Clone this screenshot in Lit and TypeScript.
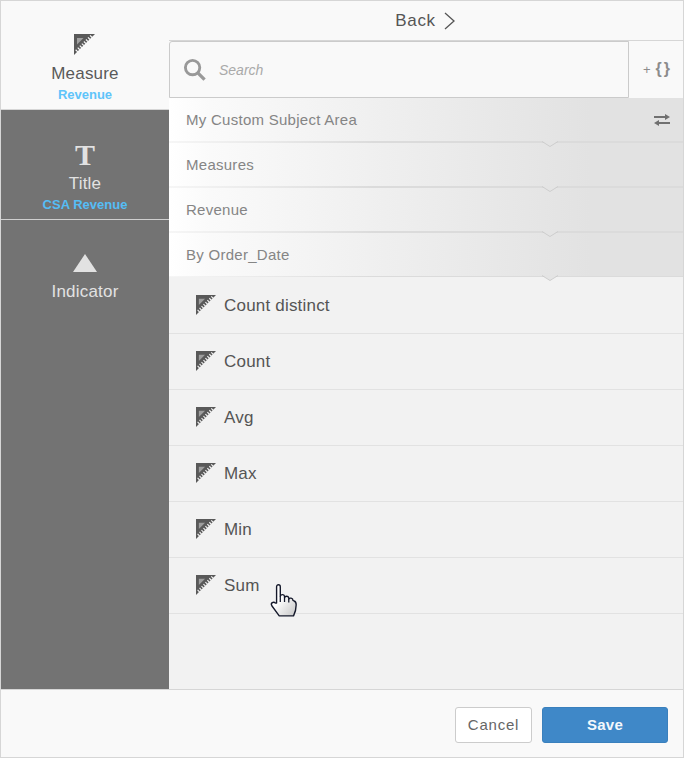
import { LitElement, html, css, svg } from "lit";
import { customElement } from "lit/decorators.js";

const ruler = (cls: string) => html`<svg class=${cls} viewBox="0 0 21 21" width="21" height="21">
  <path d="M0 0H21L0 21Z" fill="currentColor"/>
  <path d="M3 4H9.500L3 10.500Z" fill="var(--hole)" opacity=".45"/>
  <path d="M17.500 2L2 17.500" stroke="var(--hole)" stroke-width="3" stroke-dasharray="1.200 1.700" fill="none"/>
</svg>`;

const notch = html`<svg class="notch" width="18" height="7" viewBox="0 0 18 7"><path d="M1 0L9 5.500L17 0Z" fill="#e4e4e4"/><path d="M1 0.500L9 5.500L17 0.500" fill="none" stroke="#cdcdcd" stroke-width="1"/></svg>`;

@customElement("app-root")
export class AppRoot extends LitElement {
  static styles = css`
    :host { display: block; width: 684px; height: 758px; font-family: "Liberation Sans", Arial, sans-serif; }
    * { box-sizing: border-box; }
    .frame { width: 684px; height: 758px; border: 1px solid #d6d6d6; display: flex; flex-direction: column; background: #f9f9f9; }
    .body { flex: 1; display: flex; min-height: 0; }
    .side { width: 168px; background: #737373; display: flex; flex-direction: column; flex: none; }
    .tab { height: 110px; display: flex; flex-direction: column; align-items: center; color: #e2e2e2; border-bottom: 1px solid #cfcfcf; }
    .tab.first { height: 109px; background: #f9f9f9; color: #595959; padding-top: 33px; border-bottom: 1px solid #d6d6d6; --hole: #f9f9f9; }
    .tab.first svg { display: block; color: #595959; margin-left: -1px; }
    .tab.second { padding-top: 31px; }
    .tab.third { border-bottom: 0; padding-top: 34px; }
    .tab .t { font-family: "Liberation Serif", serif; font-size: 30px; line-height: 28px; height: 28px; font-weight: 700; color: #e2e2e2; }
    .lbl { font-size: 17px; line-height: 20px; letter-spacing: .2px; }
    .first .lbl { margin-top: 9px; }
    .second .lbl { margin-top: 5px; }
    .third .lbl { margin-top: 4px; }
    .sub { font-size: 13px; font-weight: 700; line-height: 16px; color: #5fc4fa; margin-top: 3px; }
    .second .sub { color: #55bdf5; margin-top: 3px; }
    .tri { width: 0; height: 0; border-left: 12px solid transparent; border-right: 12px solid transparent; border-bottom: 18px solid #e2e2e2; margin-bottom: 6px; }
    .main { flex: 1; display: flex; flex-direction: column; min-width: 0; background: #f2f2f2; }
    .top { height: 39px; flex: none; background: #f9f9f9; display: flex; align-items: center; justify-content: center; gap: 7px; color: #555; font-size: 17px; letter-spacing: .7px; padding-right: 1px; }
    .searchrow { height: 58px; flex: none; display: flex; background: #f9f9f9; border-top: 1px solid #d6d6d6; }
    .search { width: 460px; height: 57px; border: 1px solid #cbcbcb; border-radius: 3px 0 0 0; display: flex; align-items: center; padding-left: 13px; gap: 13px; color: #aaa; font-size: 14px; font-style: italic; background: #f9f9f9; }
    .vars { flex: 1; display: flex; align-items: center; justify-content: center; color: #8c8c8c; gap: 5px; padding-left: 3px; padding-bottom: 1px; }
    .vars .plus { font-size: 13px; }
    .vars .br { font-size: 16px; font-weight: 700; letter-spacing: 2px; }
    .crumb { position: relative; height: 45px; flex: none; display: flex; align-items: center; padding-left: 17px; font-size: 15px; letter-spacing: .27px; color: #858585; background: linear-gradient(90deg, #fff 0, #fafafa 8%, #e2e2e2 82%); border-bottom: 2px solid #dbdbdb; border-image: linear-gradient(90deg, #f6f6f6 0, #dbdbdb 40%) 1; justify-content: space-between; padding-right: 13px; }
    .crumb.last { border-bottom-width: 1px; height: 44px; }
    .notch { position: absolute; left: 372px; bottom: -7px; z-index: 1; }
    .crumb.last .notch { bottom: -6px; }
    .list { flex: 1; background: #f2f2f2; --hole: #f2f2f2; padding-top: 1px; }
    .row { height: 56px; border-bottom: 1px solid #e2e2e2; display: flex; align-items: center; padding-left: 27px; gap: 8px; font-size: 17px; letter-spacing: .2px; color: #555; position: relative; }
    .row svg.ico { color: #595959; margin-bottom: 2px; width: 20px; height: 20px; }
    .hand { position: absolute; left: 100px; top: 25px; z-index: 2; }
    .foot { height: 68px; flex: none; background: #f9f9f9; border-top: 1px solid #d6d6d6; display: flex; justify-content: flex-end; align-items: center; padding-right: 15px; gap: 10px; padding-top: 2px; }
    .btn { height: 36px; border-radius: 3px; display: flex; align-items: center; justify-content: center; font-family: inherit; font-size: 15px; }
    .cancel { width: 77px; background: #fff; border: 1px solid #ccc; color: #666; letter-spacing: .8px; }
    .save { width: 126px; background: #3f88c8; border: 1px solid #3a80bd; color: #f4f8fc; font-weight: 700; letter-spacing: .3px; }
  `;

  render() {
    const items = ["Count distinct", "Count", "Avg", "Max", "Min", "Sum"];
    return html`<div class="frame">
      <div class="body">
        <div class="side">
          <div class="tab first">${ruler("r")}<div class="lbl">Measure</div><div class="sub">Revenue</div></div>
          <div class="tab second"><div class="t">T</div><div class="lbl">Title</div><div class="sub">CSA Revenue</div></div>
          <div class="tab third"><div class="tri"></div><div class="lbl">Indicator</div></div>
        </div>
        <div class="main">
          <div class="top"><span>Back</span>
            <svg width="13" height="18" viewBox="0 0 13 18"><path d="M2 1l9 8-9 8" fill="none" stroke="#555" stroke-width="1.300"/></svg>
          </div>
          <div class="searchrow">
            <div class="search">
              <svg width="23" height="23" viewBox="0 0 24 24"><circle cx="10" cy="10" r="7.500" fill="none" stroke="#999" stroke-width="3"/><path d="M15.500 15.500l7 7" stroke="#999" stroke-width="3.500"/></svg>
              <span>Search</span>
            </div>
            <div class="vars"><span class="plus">+</span><span class="br">{}</span></div>
          </div>
          <div class="crumb"><span>My Custom Subject Area</span>
            <svg width="16" height="14" viewBox="0 0 16 14"><path d="M0 4H12M4 10H16" stroke="#707070" stroke-width="2"/><path d="M11 1L16 4 11 7ZM5 7L0 10 5 13Z" fill="#707070"/></svg>
            ${notch}
          </div>
          <div class="crumb"><span>Measures</span>${notch}</div>
          <div class="crumb"><span>Revenue</span>${notch}</div>
          <div class="crumb last"><span>By Order_Date</span>${notch}</div>
          <div class="list">
            ${items.map((t) => html`<div class="row">${ruler("ico")}<span>${t}</span>
              ${t === "Sum"
                ? html`<svg class="hand" width="30" height="36" viewBox="0 0 28 34">
                    <defs><linearGradient id="h" x1="0" y1="0" x2="1" y2="1"><stop offset="0.400" stop-color="#fff"/><stop offset="1" stop-color="#c4c4c4"/></linearGradient></defs>
                    ${svg`<path d="M7 19V3.500C7 1 10.500 1 10.500 3.500V12.500C11 10.500 14 10.500 14.500 12.500V14C15 12 18 12 18.500 14V15.500C19 13.500 22.500 14 22.500 16.500L23.500 17C25 17.500 25.500 19 25.500 20.500C25.500 25 24.500 28 23 31H9.500L2.500 21.500C1 19 4 17 6 19Z" fill="url(#h)" stroke="#14182a" stroke-width="1.300" stroke-linejoin="round"/><path d="M10.500 12.500V18M14.500 14V18M18.500 15.500V18.500" stroke="#14182a" stroke-width="1.200" fill="none"/>`}
                  </svg>`
                : ""}
            </div>`)}
          </div>
        </div>
      </div>
      <div class="foot">
        <div class="btn cancel">Cancel</div>
        <div class="btn save">Save</div>
      </div>
    </div>`;
  }
}
